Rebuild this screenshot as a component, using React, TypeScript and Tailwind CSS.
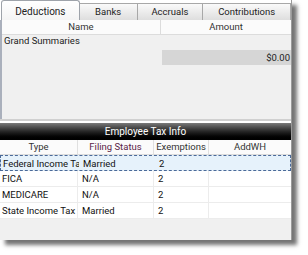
import React from "react";

const tabs = [
  { label: "Deductions", w: "w-[79px]", active: true },
  { label: "Banks", w: "w-[58px]" },
  { label: "Accruals", w: "w-[66px]" },
  { label: "Contributions", w: "w-[88px]" },
];

const rows = [
  { type: "Federal Income Tax", fs: "Married", ex: "2", sel: true },
  { type: "FICA", fs: "N/A", ex: "2" },
  { type: "MEDICARE", fs: "N/A", ex: "2" },
  { type: "State Income Tax", fs: "Married", ex: "2" },
];

export default function App() {
  return (
    <div
      className="w-[308px] h-[255px] bg-white relative overflow-hidden"
      style={{ fontFamily: "Roboto, 'Liberation Sans', Arial, sans-serif" }}
    >
      <div className="w-[292px] h-[240px] bg-[#f0f0f0] flex flex-col shadow-[5px_5px_4px_rgba(0,0,0,0.55)] border-r border-[#9a9a9a]">
        {/* tabs */}
        <div className="flex items-end h-[20px] bg-white pl-[1px]">
          {tabs.map((t) =>
            t.active ? (
              <div
                key={t.label}
                className={`${t.w} h-[20px] rounded-t-[3px] border border-b-0 border-[#9ea3aa] bg-gradient-to-b from-white to-[#f4f4f4] text-[10px] text-[#222] flex items-center justify-center pt-[1px]`}
              >
                {t.label}
              </div>
            ) : (
              <div
                key={t.label}
                className={`${t.w} h-[17px] border border-l-0 border-b-0 border-[#a8a8a8] bg-gradient-to-b from-[#fafafa] to-[#dedede] text-[9.5px] text-[#222] flex items-center justify-center`}
              >
                {t.label}
              </div>
            )
          )}
        </div>
        {/* upper grid */}
        <div className="h-[99px] border-l-2 border-[#aab0bc] flex flex-col">
          <div className="flex h-[15px] bg-[#fbfbfb] border-b border-[#dcdcdc] text-[9.5px] text-[#333]">
            <div className="w-[159px] border-r border-[#dcdcdc] flex items-center justify-center">Name</div>
            <div className="flex-1 flex items-center justify-center">Amount</div>
          </div>
          <div className="text-[9.5px] text-[#222] pl-[2px] h-[14px] leading-[12px]">Grand Summaries</div>
          <div className="flex mt-[1px]">
            <div className="w-[160px]" />
            <div className="flex-1 h-[15px] bg-[#d6d6d6] text-[9.5px] text-[#222] text-right pr-[1px] leading-[15px]">$0.00</div>
          </div>
        </div>
        <div className="h-[2px] bg-[#d0d0d0]" />
        <div className="h-[2px] bg-white" />
        {/* dark bar */}
        <div className="h-[17px] bg-gradient-to-b from-[#7a7a7a] via-[#262626] to-black text-white text-[10px] flex items-center justify-center">
          Employee Tax Info
        </div>
        {/* column header */}
        <div className="flex h-[15px] bg-[#fbfbfb] border-b border-[#dcdcdc] text-[9.5px] text-[#333]">
          <div className="w-[78px] border-r border-[#e0e0e0] flex items-center justify-center">Type</div>
          <div className="w-[76px] border-r border-[#e0e0e0] flex items-center justify-center text-[#5a2448]">Filing Status</div>
          <div className="w-[55px] border-r border-[#e0e0e0] flex items-center justify-center">Exemptions</div>
          <div className="flex-1 flex items-center justify-center">AddWH</div>
        </div>
        {rows.map((r) => (
          <div
            key={r.type}
            className={`flex h-[16px] text-[9.5px] text-[#111] ${
              r.sel ? "bg-[#e6f2fb] border border-dashed border-[#4a6a99]" : "bg-white border-b border-[#ececec]"
            }`}
          >
            <div className={`w-[78px] ${r.sel ? "" : "border-r border-[#ececec]"} pl-[2px] whitespace-nowrap overflow-hidden leading-[15px]`}>{r.type}</div>
            <div className={`w-[76px] ${r.sel ? "" : "border-r border-[#ececec]"} pl-[4px] leading-[15px]`}>{r.fs}</div>
            <div className={`w-[55px] ${r.sel ? "" : "border-r border-[#ececec]"} pl-[4px] leading-[15px]`}>{r.ex}</div>
            <div className="flex-1" />
          </div>
        ))}
        <div className="flex-1" />
      </div>
    </div>
  );
}
